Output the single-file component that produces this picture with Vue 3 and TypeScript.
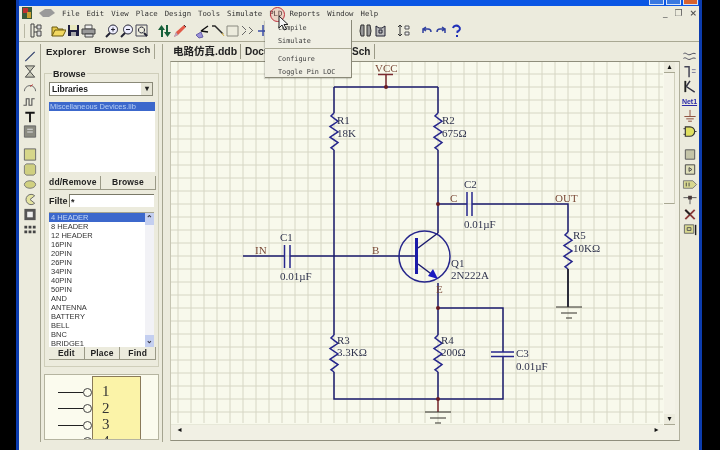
<script setup lang="ts">
interface Shape {
  d: string;
  fill?: string;
  stroke?: string;
  w?: number;
}
type Icon = Shape[];

const menus = ['File', 'Edit', 'View', 'Place', 'Design', 'Tools', 'Simulate', 'PLD', 'Reports', 'Window', 'Help'];
const parts = ['4 HEADER', '8 HEADER', '12 HEADER', '16PIN', '20PIN', '26PIN', '34PIN', '40PIN', '50PIN', 'AND', 'ANTENNA', 'BATTERY', 'BELL', 'BNC', 'BRIDGE1'];
const pins = ['1', '2', '3', '4'];

const navy = '#1b1b6e';
const dark = '#33302a';
const blue = '#26268c';

const lens = (extra: string): Icon => [
  { d: 'M9 2a4.5 4.5 0 1 0 .01 0Z', stroke: '#223', fill: '#eef' },
  { d: 'M6 10l-4 4', stroke: '#223', w: 2 },
  { d: extra, stroke: '#223' },
];

const toolGroups: Icon[][] = [
  [[
    { d: 'M3 1h3v13H3Z', stroke: '#444' },
    { d: 'M6 4h3M6 9h3', stroke: '#444' },
    { d: 'M9 2h4v4H9ZM9 8h4v5H9Z', stroke: '#444', fill: '#ddd' },
  ]],
  [
    [
      { d: 'M1 13V4h5l1 2h5v2', stroke: '#6a5a10', fill: '#e6c84a' },
      { d: 'M1 13l3-6h11l-3 6Z', stroke: '#6a5a10', fill: '#f2d860' },
    ],
    [
      { d: 'M2 2h11v11H2Z', fill: '#1d1d40' },
      { d: 'M4 2h7v5H4Z', fill: '#e8e8c0' },
      { d: 'M5 9h5v4H5Z', fill: '#aaa' },
    ],
    [
      { d: 'M4 2h7v4H4Z', stroke: '#555', fill: '#eee' },
      { d: 'M1 6h13v5H1Z', stroke: '#444', fill: '#999' },
      { d: 'M4 11h8v3H4Z', stroke: '#444', fill: '#ddd' },
    ],
  ],
  [
    lens('M7 6.500h4M9 4.500v4'),
    lens('M7 6.500h4'),
    [
      { d: 'M2 2h11v11H2Z', stroke: '#445' },
      { d: 'M7.500 4a3 3 0 1 0 .01 0Z', stroke: '#223' },
      { d: 'M10 10l3 3', stroke: '#223', w: 2 },
    ],
  ],
  [
    [
      { d: 'M4 14V7H1l3.500-5L8 7H6v7Z', fill: '#17603a' },
      { d: 'M11 2v7h3l-3.500 5L7 9h2V2Z', fill: '#17603a' },
    ],
    [
      { d: 'M2 14l2-5 8-7 2 2-8 8Z', fill: '#e25a48' },
      { d: 'M2 14l2-5 2 3Z', fill: '#b7a8c0' },
      { d: 'M12 2l2 2', stroke: '#333' },
    ],
  ],
  [
    [
      { d: 'M1 12l5-3 2 5-4 1Z', fill: '#9a90d8', stroke: '#6660a8' },
      { d: 'M6 8l7-5M6 8l7 1', stroke: '#111', w: 1.500 },
    ],
    [
      { d: 'M2 3h3l8 8', stroke: '#2a2a2a', w: 1.500 },
      { d: 'M12 10l2 3', stroke: '#d8b040' },
    ],
    [{ d: 'M2 3h11v10H2Z', stroke: '#8a8a80', fill: 'none' }],
    [
      { d: 'M2 3l4 4M2 12l4-4', stroke: '#666' },
      { d: 'M9 4l4 4M9 11l4-4', stroke: '#666' },
    ],
    [{ d: 'M8 2v11M3 8h10', stroke: '#3b4ea8', w: 1.500 }],
  ],
  [
    [
      { d: 'M3 2h3v11H3l-1-5Z', stroke: '#333', fill: '#999' },
      { d: 'M9 2h3l1 6-1 5H9Z', stroke: '#333', fill: '#999' },
    ],
    [
      { d: 'M3 3l3 2h3l3-2v10H3Z', stroke: '#223', fill: '#bbb' },
      { d: 'M6 7h3v3H6Z', stroke: '#223' },
    ],
  ],
  [[
    { d: 'M4 2v11M2 4l2-2 2 2M2 11l2 2 2-2', stroke: '#333' },
    { d: 'M9 3h4v3H9ZM9 9h4v3H9Z', stroke: '#555', fill: '#eee' },
  ]],
  [
    [{ d: 'M4 10V6h5a3 3 0 0 1 3 3M4 6l3-2M4 6l3 2', stroke: '#3040a0', w: 1.500 }],
    [{ d: 'M11 10V6H6a3 3 0 0 0-3 3M11 6L8 4M11 6L8 8', stroke: '#3040a0', w: 1.500 }],
    [
      { d: 'M4 5a3.500 3 0 1 1 4.500 3.500V10', stroke: '#2030b8', w: 2 },
      { d: 'M7 12h2v2H7Z', fill: '#2030b8' },
    ],
  ],
];

const leftTools: Icon[][] = [
  [
    [{ d: 'M3 13L13 3', stroke: '#2a3a6a', w: 1.200 }],
    [
      { d: 'M3 2h10L3 14h10Z', stroke: '#444', fill: '#c8c8b8' },
    ],
    [
      { d: 'M2 13a6 6 0 1 1 12 0', stroke: '#666', fill: 'none' },
      { d: 'M8 8l3-2', stroke: '#b33' },
    ],
    [{ d: 'M1 12h3V5h3v7h3V5h3', stroke: '#555', w: 1.200 }],
    [{ d: 'M3 3h10v2H9v9H7V5H3Z', fill: '#161616' }],
    [
      { d: 'M2 2h12v12H2Z', fill: '#8a8a80', stroke: '#666' },
      { d: 'M5 5h6v1H5ZM5 8h6v1H5Z', fill: '#ddd' },
    ],
  ],
  [
    [{ d: 'M2 2h12v12H2Z', fill: '#d6d68a', stroke: '#666' }],
    [{ d: 'M4 2h8l2 2v8l-2 2H4l-2-2V4Z', fill: '#cfcf80', stroke: '#777' }],
    [{ d: 'M2 8a6 4 0 1 0 12 0a6 4 0 1 0-12 0Z', fill: '#d0d080', stroke: '#777' }],
    [{ d: 'M13 4a5.500 5.500 0 1 0 0 8L8 8Z', fill: '#e4e4a0', stroke: '#666' }],
    [
      { d: 'M2 2h12v12H2Z', fill: '#555' },
      { d: 'M5 5h6v6H5Z', fill: '#eee' },
    ],
    [{ d: 'M2 4h3v3H2ZM6.500 4h3v3h-3ZM11 4h3v3h-3ZM2 9h3v3H2ZM6.500 9h3v3h-3ZM11 9h3v3h-3Z', fill: '#444' }],
  ],
];

const rightTools: Icon[][] = [
  [
    [{ d: 'M1 5c3-2 4 2 7 1s3-2 6-1M1 10c3-2 4 2 7 1s3-2 6-1', stroke: '#445', w: 1 }],
    [
      { d: 'M2 3h5v11', stroke: '#445', w: 1.600 },
      { d: 'M10 6h4M10 9h4', stroke: '#779' },
    ],
    [
      { d: 'M3 2v12', stroke: '#222', w: 2 },
      { d: 'M4 8l4-6M4 8l9 6', stroke: '#334', w: 1.600 },
    ],
    [],
    [{ d: 'M8 1v7M2 8h12M4 10.500h8M6 13h4', stroke: '#8a4a38' }],
    [
      { d: 'M3 3h5a5 5 0 0 1 0 10H3Z', fill: '#e0e060', stroke: '#333', w: 1.200 },
      { d: 'M1 5h2M1 11h2M13 8h2', stroke: '#333' },
    ],
  ],
  [
    [{ d: 'M3 3h10v10H3Z', fill: '#c4c4a8', stroke: '#555' }],
    [
      { d: 'M3 3h10v10H3Z', fill: '#dedeb8', stroke: '#444' },
      { d: 'M7 6l3 2-3 2Z', stroke: '#444' },
    ],
    [
      { d: 'M1 4h10l4 4-4 4H1Z', fill: '#d8d890', stroke: '#777' },
      { d: 'M4 6v4M7 6v4', stroke: '#444' },
    ],
    [{ d: 'M1 6h14M8 6v7', stroke: '#555' }, { d: 'M6 4h4v4H6Z', fill: '#4a3a3a' }],
    [{ d: 'M3 3l10 10M13 3L3 13', stroke: '#8a3a38', w: 2 }, { d: 'M3 3l5 5', stroke: '#222', w: 2 }],
    [
      { d: 'M2 3h10v9H2Z', fill: '#d8d890', stroke: '#666' },
      { d: 'M14 3v11', stroke: '#222', w: 1.500 },
      { d: 'M5 6h4v3H5Z', stroke: '#555' },
    ],
  ],
];

const gridX = Array.from({ length: 38 }, (_, i) => 178 + i * 13);
const gridY = Array.from({ length: 28 }, (_, i) => 74 + i * 13);

// three full zigzag waves going down from (x, y)
const zigzag = (x: number, y: number) => {
  let d = `M${x} ${y}`;
  [-3, 4, -4, 4, -4, 4, -3].forEach((dx, i) => {
    d += `L${x + dx} ${y + 3 + i * 5.300}`;
  });
  return d + `L${x} ${y + 37}`;
};

const wires = [
  'M334 87H438',
  'M334 87V113M334 150V335M334 372V399H503V356',
  'M503 352V308H438',
  'M438 87V113M438 150V233',
  'M438 283V335M438 372V399',
  'M243 256H284M290 256H416',
  'M438 204H467M472 204H568V232M568 269V307',
  'M418 248L438 233M418 264L434 276',
];
const resistors = [
  zigzag(334, 113),
  zigzag(438, 113),
  zigzag(334, 335),
  zigzag(438, 335),
  zigzag(568, 232),
];
const plates = ['M284.500 245V268M290 245V268', 'M467 192V216M472 192V216', 'M491 352H514M491 356.500H514'];
const grounds: [number, number][] = [[438, 412], [569, 307]];
const junctions: [number, number][] = [[386, 87], [438, 204], [438, 308], [438, 399]];

const labels: [string, number, number][] = [
  ['R1', 337, 124], ['18K', 337, 137], ['R2', 442, 124], ['675Ω', 442, 137],
  ['C2', 464, 188], ['0.01µF', 464, 228], ['R5', 573, 239], ['10KΩ', 573, 252],
  ['C1', 280, 241], ['0.01µF', 280, 280], ['Q1', 451, 267], ['2N222A', 451, 279],
  ['R3', 337, 344], ['3.3KΩ', 337, 356], ['R4', 441, 344], ['200Ω', 441, 356],
  ['C3', 516, 357], ['0.01µF', 516, 370],
];
const nets: [string, number, number][] = [
  ['VCC', 375, 72], ['C', 450, 202], ['OUT', 555, 202], ['IN', 255, 254], ['B', 372, 254], ['E', 436, 293],
];
</script>

<template>
  <div class="screen">
    <div class="window">
      <div class="titlebar">
        <span class="win-btn"></span>
        <span class="win-btn"></span>
        <span class="win-btn close"></span>
      </div>

      <div class="menubar">
        <svg class="logo" width="10" height="12" viewBox="0 0 10 12">
          <rect width="10" height="12" fill="#3a5a3a" />
          <rect x="1" y="1" width="5" height="5" fill="#c03030" />
          <rect x="5" y="5" width="4" height="6" fill="#c8a030" />
        </svg>
        <svg class="doc-icon" width="16" height="8" viewBox="0 0 16 8">
          <path d="M0 4L6 0h6l4 4-6 4H4Z" fill="#9a9a9a" />
        </svg>
        <span v-for="m in menus" :key="m" class="menu-item">{{ m }}</span>
        <span class="mdi">
          <span>_</span><span>❐</span><span class="mdi-x">×</span>
        </span>
      </div>

      <div class="toolbar">
        <div class="grip"></div>
        <div v-for="(group, g) in toolGroups" :key="g" :class="['tool-group', 'tg' + g]">
          <svg v-for="(icon, i) in group" :key="i" width="15" height="16" viewBox="0 0 15 16" fill="none">
            <path v-for="(s, k) in icon" :key="k" :d="s.d" :fill="s.fill || 'none'" :stroke="s.stroke" :stroke-width="s.w || 1" />
          </svg>
        </div>
      </div>

      <div class="workspace">
        <div class="side-tools">
          <div v-for="(group, g) in leftTools" :key="g" class="side-group">
            <svg v-for="(icon, i) in group" :key="i" width="16" height="15" viewBox="0 0 16 16">
              <path v-for="(s, k) in icon" :key="k" :d="s.d" :fill="s.fill || 'none'" :stroke="s.stroke" :stroke-width="s.w || 1" />
            </svg>
          </div>
        </div>

        <div class="panel">
          <div class="panel-tabs">
            <span class="ptab">Explorer</span>
            <span class="ptab active">Browse Sch</span>
          </div>
          <div class="panel-body">
            <div class="browse-box">
              <div class="legend">Browse</div>
              <div class="select">
                <span>Libraries</span>
                <span class="select-btn">▾</span>
              </div>
              <div class="lib-list">
                <div class="lib-row">Miscellaneous Devices.lib</div>
              </div>
              <div class="btn-row">
                <span class="btn wide">dd/Remove</span>
                <span class="btn">Browse</span>
              </div>
              <div class="filter-row">
                <span class="filter-label">Filte</span>
                <span class="filter-input">*</span>
              </div>
              <div class="part-list">
                <div class="part-rows">
                  <div v-for="(p, i) in parts" :key="p" :class="['part', { selected: i === 0 }]">{{ p }}</div>
                </div>
                <div class="part-scroll">
                  <span class="sb-arrow">⌃</span>
                  <span class="sb-arrow">⌄</span>
                </div>
              </div>
              <div class="btn-row three">
                <span class="btn">Edit</span>
                <span class="btn">Place</span>
                <span class="btn">Find</span>
              </div>
            </div>
            <div class="preview">
              <div class="pin-col">
                <div v-for="p in pins" :key="p" class="pin">
                  <span class="pin-line"></span><span class="pin-dot"></span>
                </div>
              </div>
              <div class="chip">
                <div v-for="p in pins" :key="p" class="chip-num">{{ p }}</div>
              </div>
            </div>
          </div>
        </div>

        <div class="doc">
          <div class="doc-tabs">
            <span class="dtab first">电路仿真.ddb</span>
            <span class="dtab second">Docu</span>
            <span class="dtab third">Sch</span>
          </div>
          <div class="sheet">
            <div class="sheet-main">
              <svg class="schematic" width="493" height="363" viewBox="171 62 493 363">
                <rect x="171" y="62" width="493" height="363" fill="#f8f9ec" />
                <path v-for="x in gridX" :key="'x' + x" :d="`M${x} 62V423`" stroke="#d6d6c4" />
                <path v-for="y in gridY" :key="'y' + y" :d="`M171 ${y}H663`" stroke="#d6d6c4" />

                <path v-for="(d, i) in wires" :key="'w' + i" :d="d" :stroke="navy" stroke-width="1.500" fill="none" />
                <path v-for="(d, i) in resistors" :key="'r' + i" :d="d" :stroke="blue" stroke-width="1.500" fill="none" />
                <path v-for="(d, i) in plates" :key="'p' + i" :d="d" :stroke="blue" stroke-width="1.500" fill="none" />

                <circle cx="424.500" cy="256.500" r="25.500" fill="none" :stroke="blue" stroke-width="1.500" />
                <path d="M416.500 238V274" stroke="#1a1aa8" stroke-width="3" />
                <path d="M438 279L428 276L433 269Z" fill="#1a1ac0" />

                <path d="M386 87V75M378 74.500H393" stroke="#7a2a30" stroke-width="1.500" />
                <path d="M438 399V412" stroke="#7a2a30" stroke-width="1.500" />
                <path d="M568 269V307" stroke="#222" stroke-width="1.500" />
                <g v-for="(g, i) in grounds" :key="'g' + i">
                  <path :d="`M${g[0] - 13} ${g[1]}h26M${g[0] - 8} ${g[1] + 6}h16M${g[0] - 3} ${g[1] + 11}h6`" :stroke="dark" stroke-width="1.200" />
                </g>
                <circle v-for="(j, i) in junctions" :key="'j' + i" :cx="j[0]" :cy="j[1]" r="2" fill="#6a1c24" />

                <text v-for="(t, i) in labels" :key="'l' + i" class="sch-label" :x="t[1]" :y="t[2]">{{ t[0] }}</text>
                <text v-for="(t, i) in nets" :key="'n' + i" class="sch-net" :x="t[1]" :y="t[2]">{{ t[0] }}</text>
              </svg>
              <div class="vscroll">
                <span class="sb-btn">▴</span>
                <span class="sb-thumb"></span>
                <span class="sb-btn bottom">▾</span>
              </div>
            </div>
            <div class="hscroll">
              <span class="sb-btn">◂</span>
              <span class="sb-btn right">▸</span>
            </div>
          </div>
        </div>

        <div class="side-tools right">
          <div v-for="(group, g) in rightTools" :key="g" class="side-group">
            <template v-for="(icon, i) in group" :key="i">
              <span v-if="icon.length === 0" class="net-tag">Net1</span>
              <svg v-else width="16" height="15" viewBox="0 0 16 16">
                <path v-for="(s, k) in icon" :key="k" :d="s.d" :fill="s.fill || 'none'" :stroke="s.stroke" :stroke-width="s.w || 1" />
              </svg>
            </template>
          </div>
        </div>
      </div>
    </div>

    <div class="pld-menu">
      <div class="drop-item">Compile</div>
      <div class="drop-item">Simulate</div>
      <div class="drop-sep"></div>
      <div class="drop-item">Configure</div>
      <div class="drop-item">Toggle Pin LOC</div>
    </div>
    <span class="click-ring"></span>
    <svg class="cursor" width="11" height="16" viewBox="0 0 11 16">
      <path d="M1 1V13L4 10L6.500 15L8.500 14L6 9.500H10Z" fill="#f4f4f4" stroke="#222" />
    </svg>
  </div>
</template>

<style>
html,
body {
  margin: 0;
  background: #000;
}
</style>

<style scoped>
.screen {
  position: relative;
  width: 720px;
  height: 450px;
  background: #000;
  overflow: hidden;
  filter: blur(0.35px);
  font-family: "Liberation Sans", Arial, sans-serif;
  color: #222;
}

.window {
  box-sizing: border-box;
  width: 686px;
  height: 450px;
  margin-left: 16px;
  border-left: 3px solid #0c3cae;
  border-right: 3px solid #0c3cae;
  background: #ecebdd;
  display: flex;
  flex-direction: column;
}

.titlebar {
  height: 6px;
  flex: none;
  background: #0a56e4;
  display: flex;
  justify-content: flex-end;
  align-items: flex-start;
  gap: 2px;
  padding-right: 1px;
}

.win-btn {
  width: 13px;
  height: 4px;
  background: #3a78e0;
  border: 1px solid #d8e4f8;
  border-top: 0;
}

.win-btn.close {
  background: #d8622e;
}

.menubar {
  height: 14px;
  flex: none;
  display: flex;
  align-items: center;
  padding-left: 3px;
  gap: 7px;
  font: 7.300px/13px "DejaVu Sans Mono", monospace;
  color: #333;
}

.doc-icon {
  width: 16px;
}

.mdi {
  margin-left: auto;
  display: flex;
  gap: 7px;
  padding-right: 2px;
  font: 9px "DejaVu Sans", sans-serif;
  color: #555;
}

.mdi-x {
  font-weight: bold;
}

.toolbar {
  height: 21px;
  flex: none;
  display: flex;
  align-items: center;
  padding-left: 5px;
  border-bottom: 1px solid #a9a893;
}

.grip {
  width: 1px;
  height: 14px;
  background: #b8b7a4;
  margin-right: 3px;
}

.tool-group {
  display: flex;
  margin-left: 8px;
}

.tg0 {
  margin-left: 0;
}

.tg5 {
  margin-left: 88px;
}

.workspace {
  flex: 1;
  min-height: 0;
  display: flex;
}

.side-tools {
  width: 21px;
  flex: none;
  padding-top: 7px;
  display: flex;
  flex-direction: column;
  align-items: center;
  gap: 8px;
}

.side-tools.right {
  width: 19px;
}

.side-group {
  display: flex;
  flex-direction: column;
  align-items: center;
}

.net-tag {
  height: 15px;
  font: bold 7px/15px "Liberation Sans", sans-serif;
  color: #2828a8;
  text-decoration: underline;
}

.panel {
  width: 123px;
  flex: none;
  margin-top: 2px;
  border-left: 1px solid #a5a490;
  border-right: 1px solid #a5a490;
  box-sizing: border-box;
  height: 398px;
  display: flex;
  flex-direction: column;
}

.panel-tabs {
  height: 15px;
  display: flex;
  font: bold 9.500px/15px "Liberation Sans", sans-serif;
  letter-spacing: 0.2px;
  padding-left: 5px;
  gap: 8px;
  flex: none;
}

.ptab.active {
  border-right: 1px solid #a5a490;
  padding-right: 3px;
  line-height: 12px;
}

.panel-body {
  flex: 1;
  display: flex;
  flex-direction: column;
  padding: 14px 3px 0;
}

.browse-box {
  height: 294px;
  flex: none;
  border: 1px solid #cfceba;
  padding: 0 4px;
  box-sizing: border-box;
  display: flex;
  flex-direction: column;
}

.legend {
  font: bold 9px/10px "Liberation Sans", sans-serif;
  margin: -5px 0 0 3px;
  background: #ecebdd;
  align-self: flex-start;
  padding: 0 1px;
}

.select {
  margin-top: 3px;
  height: 14px;
  flex: none;
  border: 1px solid #8a8978;
  background: #fff;
  display: flex;
  justify-content: space-between;
  align-items: center;
  font: bold 8.500px "Liberation Sans", sans-serif;
  padding-left: 2px;
  width: 104px;
  box-sizing: border-box;
}

.select-btn {
  width: 11px;
  height: 12px;
  background: #e6e5d6;
  font-size: 8px;
  line-height: 12px;
  text-align: center;
}

.lib-list {
  margin-top: 6px;
  height: 70px;
  flex: none;
  background: #fff;
  width: 106px;
}

.lib-row {
  height: 9px;
  background: #3c68cc;
  color: #b8d0f4;
  font: 7.500px/9px "Liberation Sans", sans-serif;
  padding-left: 1px;
}

.btn-row {
  display: flex;
  height: 14px;
  flex: none;
  margin-top: 4px;
  width: 107px;
}

.btn {
  flex: 1;
  text-align: center;
  font: bold 8.500px/13px "Liberation Sans", sans-serif;
  letter-spacing: 0.2px;
  background: #ecebdd;
  border-right: 1px solid #9a9986;
  border-bottom: 1px solid #9a9986;
  box-sizing: border-box;
  white-space: nowrap;
}

.btn.wide {
  flex: none;
  width: 52px;
  text-align: left;
}

.filter-row {
  display: flex;
  align-items: center;
  margin-top: 4px;
  height: 13px;
  flex: none;
}

.filter-label {
  font: bold 9px "Liberation Sans", sans-serif;
  width: 20px;
  flex: none;
}

.filter-input {
  width: 87px;
  height: 13px;
  background: #fff;
  border-left: 1px solid #7a7968;
  border-top: 1px solid #7a7968;
  box-sizing: border-box;
  font: bold 9px/14px "Liberation Sans", sans-serif;
  padding-left: 1px;
}

.part-list {
  display: flex;
  width: 105px;
  margin-top: 5px;
  height: 135px;
  flex: none;
  background: #fff;
  border-top: 1px solid #a5a490;
  box-sizing: border-box;
}

.part-rows {
  flex: 1;
  font: 7.500px/9px "Liberation Sans", sans-serif;
  color: #333;
}

.part {
  padding-left: 2px;
}

.part.selected {
  background: #3c68cc;
  color: #c4d8f6;
}

.part-scroll {
  width: 9px;
  background: #f2f2f6;
  display: flex;
  flex-direction: column;
  justify-content: space-between;
}

.sb-arrow {
  height: 12px;
  background: #c4cff0;
  color: #334;
  font: bold 8px/12px "Liberation Sans", sans-serif;
  text-align: center;
}

.btn-row.three {
  margin-top: 0;
  height: 13px;
}

.preview {
  margin-top: 7px;
  height: 66px;
  flex: none;
  background: #fbfbee;
  border: 1px solid #b5b4a0;
  box-sizing: border-box;
  display: flex;
  overflow: hidden;
  padding: 1px 0 0 13px;
}

.pin-col {
  width: 34px;
  padding-top: 8px;
  flex: none;
}

.pin {
  height: 16.500px;
  display: flex;
  align-items: center;
}

.pin-line {
  width: 25px;
  height: 1px;
  background: #222;
}

.pin-dot {
  box-sizing: border-box;
  width: 9px;
  height: 9px;
  border: 1px solid #444;
  border-radius: 50%;
  background: #fbfbee;
}

.chip {
  width: 49px;
  height: 100px;
  flex: none;
  background: #fbf3a8;
  border: 1px solid #8a7a5a;
  box-sizing: border-box;
  font: 15px/16.500px "Liberation Serif", serif;
  padding: 6px 0 0 9px;
  color: #333;
}

.doc {
  flex: 1;
  min-width: 0;
  display: flex;
  flex-direction: column;
  margin-left: 7px;
}

.doc-tabs {
  height: 19px;
  flex: none;
  display: flex;
  align-items: center;
  font: bold 10px "Liberation Sans", "Noto Sans CJK SC", sans-serif;
  padding-left: 3px;
}

.dtab {
  height: 15px;
  line-height: 15px;
  white-space: nowrap;
}

.dtab.first {
  width: 67px;
  border-right: 1px solid #9a9986;
  font-size: 10.500px;
}

.dtab.second {
  margin-left: 4px;
}

.dtab.third {
  margin-left: 82px;
  padding-right: 4px;
  border-right: 1px solid #9a9986;
}

.sheet {
  flex: 1;
  min-height: 0;
  margin-bottom: 9px;
  border-top: 1px solid #8f8e7c;
  border-left: 1px solid #c6c5b2;
  border-right: 1px solid #b0af9c;
  border-bottom: 1px solid #8f8e7c;
  background: #f1f0e4;
  display: flex;
  flex-direction: column;
  box-sizing: border-box;
}

.sheet-main {
  display: flex;
  height: 363px;
  flex: none;
}

.schematic {
  display: block;
  flex: none;
}

.sch-label {
  font: 11px "Liberation Serif", serif;
  fill: #30344e;
}

.sch-net {
  font: 11px "Liberation Serif", serif;
  fill: #7a4a38;
}

.vscroll {
  width: 11px;
  display: flex;
  flex-direction: column;
  background: #f4f3e8;
}

.sb-thumb {
  height: 131px;
  border-bottom: 1px solid #a9a893;
  border-right: 1px solid #d0cfbc;
  box-sizing: border-box;
}

.sb-btn {
  height: 10px;
  width: 11px;
  flex: none;
  font: 8px/10px "DejaVu Sans", sans-serif;
  text-align: center;
  background: #ecebdd;
  border-bottom: 1px solid #a9a893;
  color: #111;
}

.sb-btn.bottom {
  margin-top: auto;
}

.hscroll {
  height: 11px;
  display: flex;
  justify-content: space-between;
  padding: 0 17px 0 3px;
}

.hscroll .sb-btn {
  border-bottom: 0;
  background: transparent;
}

.pld-menu {
  position: absolute;
  left: 265px;
  top: 20px;
  width: 87px;
  height: 58px;
  box-sizing: border-box;
  padding: 2px 0 0 13px;
  background: #f0efe4;
  border-right: 1px solid #8a8978;
  border-bottom: 1px solid #8a8978;
  box-shadow: -1px 1px 1px rgba(0, 0, 0, 0.15);
  font: 6.800px/12.500px "DejaVu Sans Mono", monospace;
  color: #3d3d3d;
}

.drop-sep {
  height: 1px;
  background: #a9a893;
  margin: 1px 0 4px -13px;
}

.click-ring {
  position: absolute;
  left: 270px;
  top: 7px;
  width: 13px;
  height: 13px;
  border: 1px solid #c0303c;
  border-radius: 50%;
  background: rgba(230, 80, 60, 0.15);
}

.cursor {
  position: absolute;
  left: 278px;
  top: 15px;
}
</style>
